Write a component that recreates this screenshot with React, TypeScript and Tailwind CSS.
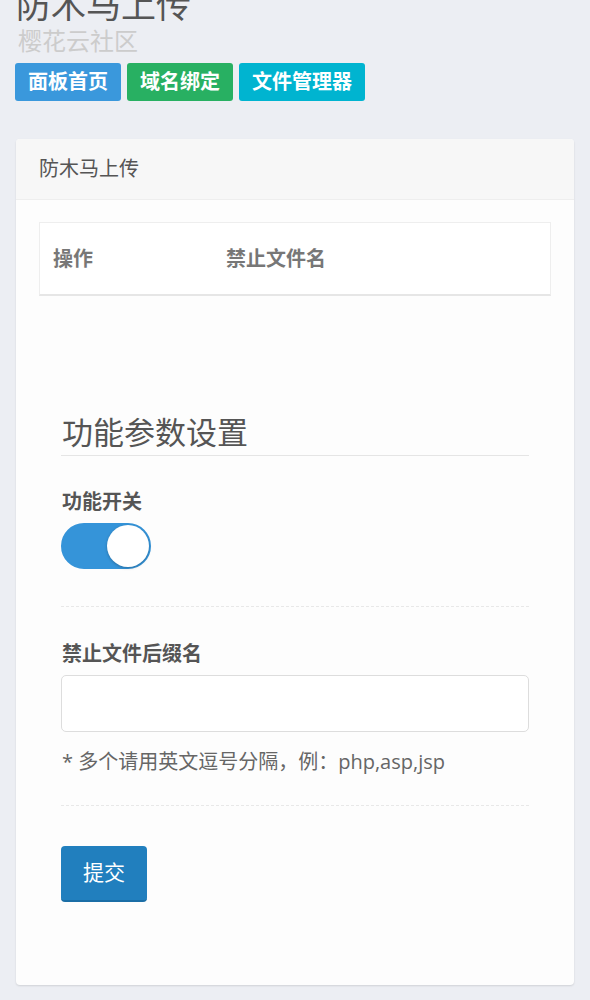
import { useState } from "react";

const font = { fontFamily: '"Open Sans", "Noto Sans CJK SC", "Noto Sans", sans-serif' };

function Toggle() {
  const [on, setOn] = useState(true);
  return (
    <button
      type="button"
      onClick={() => setOn(!on)}
      className={
        "relative block h-[46px] w-[90px] rounded-full border-2 " +
        (on ? "border-[#3594d9] bg-[#3594d9]" : "border-[#dddddd] bg-[#f5f5f5]")
      }
    >
      <span
        className={
          "absolute top-0 h-[42px] w-[42px] rounded-full bg-white shadow-[0_1px_3px_rgba(0,0,0,0.25)] " +
          (on ? "right-0" : "left-0")
        }
      />
    </button>
  );
}

export default function App() {
  return (
    <div style={font} className="min-h-[1000px] overflow-hidden bg-[#eceef3] px-[16px] pb-[15px]">
      <h1 className="mt-[-15px] text-[35px] leading-[40px] font-normal text-[#555555]">防木马上传</h1>
      <div className="mt-[2px] pl-[2px] text-[24px] leading-[28px] text-[#cccccc]">樱花云社区</div>
      <div className="mt-[8px] ml-[-1px] flex gap-[6px]">
        <a className="flex h-[38px] items-center rounded-[3px] bg-[#3a98dc] px-[13px] text-[20px] font-bold text-white">
          面板首页
        </a>
        <a className="flex h-[38px] items-center rounded-[3px] bg-[#28b062] px-[13px] text-[20px] font-bold text-white">
          域名绑定
        </a>
        <a className="flex h-[38px] items-center rounded-[3px] bg-[#00b4d0] px-[13px] text-[20px] font-bold text-white">
          文件管理器
        </a>
      </div>

      <div className="mt-[38px] h-[846px] rounded-[4px] bg-[#fdfdfd] shadow-[0_1px_2px_rgba(0,0,0,0.12)]">
        <div className="flex h-[61px] items-center rounded-t-[4px] border-b border-[#eeeeee] bg-[#f7f7f7] px-[23px] text-[20px] text-[#555555]">
          防木马上传
        </div>
        <div className="px-[23px] pt-[22px]">
          <div className="flex h-[74px] items-center border border-[#eeeeee] border-b-2 border-b-[#e6e6e6] bg-white px-[13px] text-[20px] font-bold text-[#777777]">
            <div className="w-[173px]">操作</div>
            <div>禁止文件名</div>
          </div>
        </div>

        <div className="px-[45px]">
          <div className="mt-[115px] border-b border-[#e5e5e5] pb-[2px] pl-[1px] text-[31px] leading-[42px] text-[#555555]">
            功能参数设置
          </div>

          <div className="mt-[32px] pl-[1px] text-[20px] leading-[28px] font-bold text-[#555555]">功能开关</div>
          <div className="mt-[7px]">
            <Toggle />
          </div>
          <div className="mt-[37px] border-t border-dashed border-[#e8e8e8]" />

          <div className="mt-[33px] pl-[1px] text-[20px] leading-[28px] font-bold text-[#555555]">禁止文件后缀名</div>
          <input
            type="text"
            className="mt-[7px] block h-[57px] w-full rounded-[5px] border border-[#dddddd] bg-white px-[12px] text-[20px] outline-none"
          />
          <div className="mt-[16px] pl-[1px] text-[20px] leading-[28px] text-[#666666]">
            * 多个请用英文逗号分隔，例：php,asp,jsp
          </div>
          <div className="mt-[29px] border-t border-dashed border-[#e8e8e8]" />

          <button
            type="button"
            className="mt-[40px] h-[56px] w-[86px] rounded-[4px] border-b-2 border-[#1b6ea6] bg-[#217fbe] text-[21px] text-white"
          >
            提交
          </button>
        </div>
      </div>
    </div>
  );
}
